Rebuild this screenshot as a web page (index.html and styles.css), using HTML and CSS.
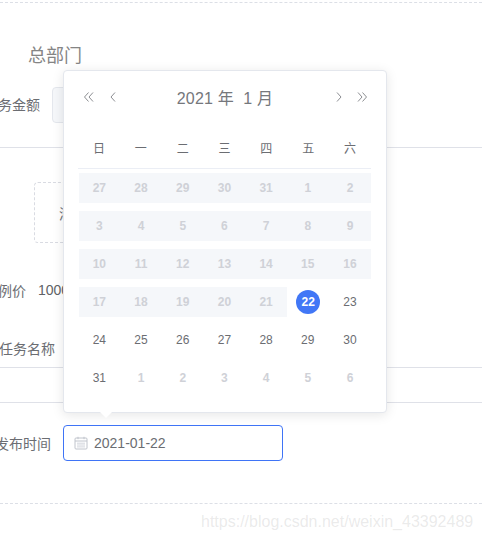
FILE: index.html
```html
<!DOCTYPE html>
<html lang="zh">
<head>
<meta charset="utf-8">
<title>日期选择</title>
<link rel="stylesheet" href="styles.css">
</head>
<body>
<div class="page">
  <div class="dash dash-top"></div>
  <h2 class="dept">总部门</h2>
  <div class="row row-amount">
    <span class="label">任务金额</span>
    <span class="field-disabled"></span>
  </div>
  <div class="rule rule-a"></div>
  <div class="upload"><span class="upload-text">添加图片</span></div>
  <div class="row row-price">
    <span class="label">比例价</span>
    <span class="value">1000</span>
  </div>
  <div class="row row-name">
    <span class="label">任务名称</span>
  </div>
  <div class="rule rule-b"></div>
  <div class="rule rule-c"></div>
  <div class="row row-time">
    <span class="label">发布时间</span>
    <div class="date-input">
      <svg class="cal-icon" viewBox="0 0 14 14" width="14" height="14" aria-hidden="true">
        <rect x="1" y="2" width="12" height="11" rx="1" fill="none" stroke="#c0c4cc"/>
        <path d="M1 5h12M4 0.8v2.4M10 0.8v2.4" stroke="#c0c4cc" fill="none"/>
        <path d="M3 7.2h8M3 9h8M3 10.9h8" stroke="#d3d6dd" fill="none"/>
      </svg>
      <span class="date-text">2021-01-22</span>
    </div>
  </div>
  <div class="dash dash-bottom"></div>

  <div class="picker">
    <div class="picker-head">
      <div class="nav nav-prev">
        <svg viewBox="0 0 12 12" width="12" height="12" aria-hidden="true"><path d="M5.5 1.5 1.5 6l4 4.5M10 1.5 6 6l4 4.5" class="chev"/></svg>
        <svg viewBox="0 0 12 12" width="12" height="12" aria-hidden="true"><path d="M8 1.5 4 6l4 4.5" class="chev"/></svg>
      </div>
      <div class="picker-title">2021 年&nbsp; 1 月</div>
      <div class="nav nav-next">
        <svg viewBox="0 0 12 12" width="12" height="12" aria-hidden="true"><path d="M4 1.5 8 6l-4 4.5" class="chev"/></svg>
        <svg viewBox="0 0 12 12" width="12" height="12" aria-hidden="true"><path d="M2 1.5 6 6l-4 4.5M6.5 1.5 10.5 6l-4 4.5" class="chev"/></svg>
      </div>
    </div>
    <div class="weekdays">
      <span>日</span><span>一</span><span>二</span><span>三</span><span>四</span><span>五</span><span>六</span>
    </div>
    <div class="days">
      <span class="off">27</span><span class="off">28</span><span class="off">29</span><span class="off">30</span><span class="off">31</span><span class="off">1</span><span class="off">2</span>
      <span class="off">3</span><span class="off">4</span><span class="off">5</span><span class="off">6</span><span class="off">7</span><span class="off">8</span><span class="off">9</span>
      <span class="off">10</span><span class="off">11</span><span class="off">12</span><span class="off">13</span><span class="off">14</span><span class="off">15</span><span class="off">16</span>
      <span class="off">17</span><span class="off">18</span><span class="off">19</span><span class="off">20</span><span class="off">21</span><span class="sel"><b>22</b></span><span>23</span>
      <span>24</span><span>25</span><span>26</span><span>27</span><span>28</span><span>29</span><span>30</span>
      <span>31</span><span class="next">1</span><span class="next">2</span><span class="next">3</span><span class="next">4</span><span class="next">5</span><span class="next">6</span>
    </div>
    <div class="arrow"></div>
  </div>

  <div class="watermark">https://blog.csdn.net/weixin_43392489</div>
</div>
</body>
</html>
```

FILE: styles.css
```css
* { box-sizing: border-box; }
html, body { margin: 0; padding: 0; background: #fff; }
.page {
  position: relative;
  width: 482px;
  height: 540px;
  overflow: hidden;
  padding-top: 2px;
  font-family: "Liberation Sans", "Noto Sans CJK SC", sans-serif;
  font-size: 14px;
  color: #6b6d72;
}
.dash { border-top: 1px dashed #dcdfe6; height: 0; }
.dept {
  margin: 42px 0 0 28px;
  height: 22px;
  line-height: 22px;
  font-size: 18px;
  font-weight: 400;
  color: #858585;
}
.row { display: flex; align-items: center; }
.label { flex: none; white-space: nowrap; direction: rtl; }
.row-amount { margin-top: 20px; height: 36px; }
.row-amount .label { width: 40px; padding-bottom: 2px; }
.field-disabled {
  margin-left: 12px;
  width: 120px;
  height: 36px;
  border: 1px solid #e4e7ed;
  border-radius: 4px;
  background: #f5f7fa;
}
.rule { border-top: 1px solid #dfe1e8; height: 0; }
.rule-a { margin-top: 24px; }
.upload {
  margin: 34px 0 0 34px;
  width: 120px;
  height: 61px;
  border: 1px dashed #d9dbe2;
  border-radius: 4px;
  display: flex;
  align-items: center;
  padding-left: 24px;
}
.row-price { margin-top: 38px; height: 18px; }
.row-price .label { width: 26px; }
.value { margin-left: 12px; color: #606266; }
.row-name { margin-top: 40px; height: 18px; }
.row-name .label { width: 55px; }
.rule-b { margin-top: 10px; }
.rule-c { margin-top: 34px; }
.row-time { margin-top: 22px; height: 36px; }
.row-time .label { width: 51px; }
.date-input {
  margin-left: 12px;
  width: 220px;
  height: 36px;
  border: 1px solid #3f74f6;
  border-radius: 4px;
  display: flex;
  align-items: center;
  padding-left: 10px;
  gap: 6px;
}
.cal-icon { flex: none; }
.dash-bottom { margin-top: 42px; }

.picker {
  position: absolute;
  left: 63px;
  top: 70px;
  width: 324px;
  height: 343px;
  padding: 0 15px 0 15px;
  background: #fff;
  border: 1px solid #e4e7ed;
  border-radius: 4px;
  box-shadow: 0 2px 12px rgba(0, 0, 0, 0.1);
}
.picker-head {
  display: flex;
  align-items: center;
  justify-content: space-between;
  height: 52px;
  padding: 0 3px;
}
.nav { display: flex; }
.nav-prev { gap: 12px; margin-left: 1px; }
.nav-next { gap: 11px; }
.chev { fill: none; stroke: #7f8186; stroke-width: 0.9; }
.picker-title { font-size: 16px; letter-spacing: 0.2px; color: #75777c; margin-right: 2px; }
.weekdays {
  display: grid;
  grid-template-columns: repeat(7, 1fr);
  height: 46px;
  padding-top: 15px;
  margin-left: -1px;
  border-bottom: 1px solid #ebeef5;
  text-align: center;
  font-size: 12px;
  line-height: 22px;
  align-items: start;
}
.days {
  display: grid;
  grid-template-columns: repeat(7, 41.7px);
  grid-auto-rows: 30px;
  row-gap: 8px;
  margin-top: 4px;
  font-size: 12px;
  color: #6b6d72;
}
.days span { display: flex; align-items: center; justify-content: center; padding-right: 1px; }
.days span:nth-child(7n) { padding-right: 0; }
.days .off { background: #f5f7fa; color: #cfd1d7; font-weight: 700; }
.days .next { color: #cfd1d7; font-weight: 700; }
.days .sel { padding-right: 0; }
.sel b {
  display: flex;
  align-items: center;
  justify-content: center;
  width: 24px;
  height: 24px;
  border-radius: 50%;
  background: #4177f6;
  color: #fff;
}
.arrow {
  position: absolute;
  left: 36px;
  bottom: -6px;
  width: 0;
  height: 0;
  border-left: 6px solid transparent;
  border-right: 6px solid transparent;
  border-top: 6px solid #fff;
}
.watermark {
  position: absolute;
  left: 201px;
  top: 513px;
  font-size: 16px;
  line-height: 18px;
  white-space: nowrap;
  color: rgba(150, 150, 150, 0.2);
}
```
